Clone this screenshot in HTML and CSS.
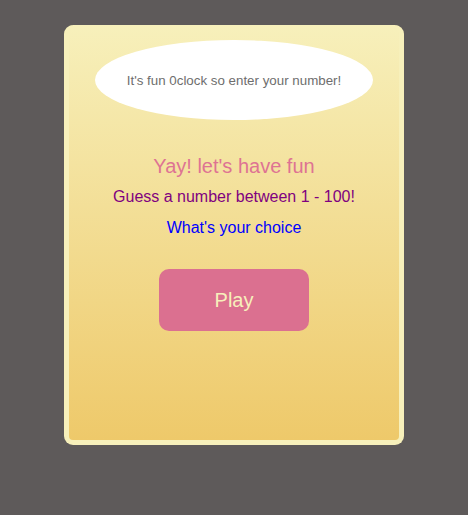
FILE: index.html
```html
<!DOCTYPE html>
<html>
<head>
<meta charset="utf-8">
<link rel="stylesheet" href="styles.css">
</head>
<body>
<div class="card">
  <div class="bubble">It's fun 0clock so enter your number!</div>
  <h1 class="title">Yay! let's have fun</h1>
  <p class="guess">Guess a number between 1 - 100!</p>
  <p class="choice">What's your choice</p>
  <button class="play">Play</button>
</div>
</body>
</html>
```
FILE: styles.css
```css
html, body {
  margin: 0;
  padding: 0;
}
body {
  background: #5e5a5a;
  font-family: "Liberation Sans", Arial, sans-serif;
  min-height: 515px;
  padding-top: 25px;
  box-sizing: border-box;
}
.card {
  width: 340px;
  height: 420px;
  margin: 0 auto;
  box-sizing: border-box;
  border: 5px solid #f7f0bb;
  border-top-width: 0;
  border-radius: 9px;
  background: linear-gradient(to bottom, #f7f0bb, #eec96a);
  display: flex;
  flex-direction: column;
  align-items: center;
  padding-top: 15px;
}
.bubble {
  width: 278px;
  height: 80px;
  border-radius: 50%;
  background: #fff;
  color: #6e6e6e;
  font-size: 13.33px;
  display: flex;
  align-items: center;
  justify-content: center;
  flex-shrink: 0;
}
.title {
  margin: 34px 0 0;
  font-size: 20px;
  font-weight: normal;
  color: #de7393;
  line-height: 24px;
}
.guess {
  margin: 10px 0 0;
  font-size: 16px;
  color: #800080;
  line-height: 18px;
}
.choice {
  margin: 13px 0 0;
  font-size: 16px;
  color: #0000ff;
  line-height: 18px;
}
.play {
  margin-top: 32px;
  width: 150px;
  height: 62px;
  border: none;
  border-radius: 10px;
  background: #db7090;
  color: #f7efbb;
  font-family: "Liberation Sans", Arial, sans-serif;
  font-size: 20px;
}
```
